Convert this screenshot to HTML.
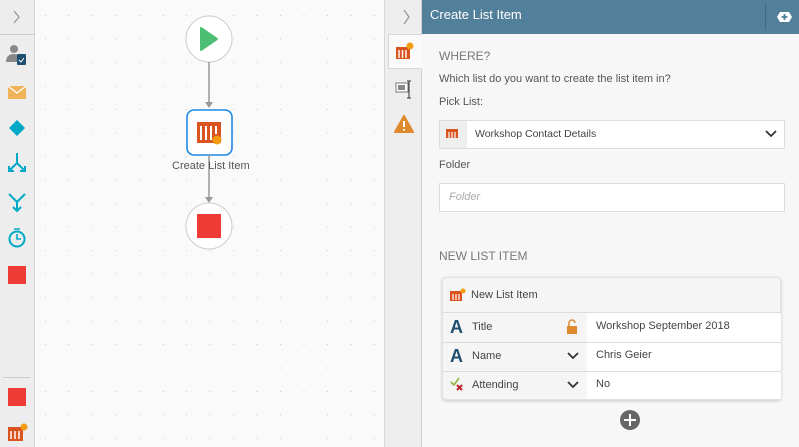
<!DOCTYPE html>
<html><head><style>
*{margin:0;padding:0;box-sizing:border-box}
body{width:799px;height:447px;overflow:hidden;font-family:"Liberation Sans",sans-serif;position:relative;background:#fafafa}
.a{position:absolute}
.t{position:absolute;color:#555;font-size:11px;white-space:nowrap}
</style></head><body>
<!-- left toolbar -->
<div class="a" style="left:0;top:0;width:35px;height:447px;background:#ededed;border-right:1px solid #d6d6d6"></div>
<div class="a" style="left:0;top:34px;width:35px;height:1px;background:#ccc"></div>
<svg class="a" style="left:0;top:0" width="35" height="447">
<path d="M14 11l5 6-5 6" stroke="#999" stroke-width="1.3" fill="none"/>
<circle cx="14" cy="49" r="4" fill="#888"/><path d="M6 62q0-8 8-8q6 0 7 5v3z" fill="#888"/>
<rect x="17" y="54" width="9" height="11" rx="1" fill="#1f4e6e"/><path d="M19 60l2 2 3-4" stroke="#fff" fill="none"/>
<rect x="8" y="86" width="18" height="13" fill="#f0b35a"/><path d="M8 86l9 7 9-7" stroke="#fff" stroke-width="1.3" fill="none"/>
<path d="M17 120l8 8-8 8-8-8z" fill="#00a9c7"/>
<path d="M17 153v10M17 163l-7 7M17 163l7 7M9 166v5h5M25 166v5h-5" stroke="#00a9c7" stroke-width="2" fill="none"/>
<path d="M9 194l8 8 8-8M17 202v9M13 207l4 4 4-4" stroke="#00a9c7" stroke-width="2" fill="none"/>
<circle cx="17" cy="239" r="7.5" stroke="#00a9c7" stroke-width="2" fill="none"/><path d="M17 234v5h4M14 229h6" stroke="#00a9c7" stroke-width="1.6" fill="none"/>
<rect x="8" y="266" width="18" height="18" fill="#ef3b36"/>
<rect x="3" y="377" width="27" height="1" fill="#ccc"/>
<rect x="8" y="388" width="18" height="18" fill="#ef3b36"/>
<rect x="8" y="427" width="15" height="14" fill="#d9541e"/><path d="M11 431v8M15 431v8M19 431v8" stroke="#fff" stroke-width="1.5"/><circle cx="24" cy="427" r="3.5" fill="#f39c12"/>
</svg>
<!-- canvas dots -->
<svg class="a" style="left:36px;top:0" width="348" height="447">
<defs><pattern id="d" width="23.5" height="23.5" patternUnits="userSpaceOnUse" x="9" y="15"><rect width="1" height="1" fill="#ccc"/></pattern></defs>
<rect width="348" height="447" fill="url(#d)"/>
</svg>
<svg class="a" style="left:150px;top:0" width="120" height="260">
<circle cx="59" cy="39" r="23" fill="#fff" stroke="#ccc"/>
<path d="M51 28l16 11-16 11z" fill="#4cbf74" stroke="#4cbf74" stroke-linejoin="round" stroke-width="2"/>
<path d="M59 62v44" stroke="#999" stroke-width="1.5"/><path d="M55 102l4 6 4-6z" fill="#999"/>
<rect x="37" y="110" width="45" height="45" rx="7" fill="#fff" stroke="#1e88e5" stroke-width="1.6"/>
<rect x="47" y="122" width="24" height="21" fill="#d9541e"/><path d="M51 126v14M56 126v14M61 126v14M66 126v8" stroke="#fff" stroke-width="2"/>
<circle cx="67" cy="140" r="4.5" fill="#f39c12"/>
<path d="M59 155v46" stroke="#999" stroke-width="1.5"/><path d="M55 197l4 6 4-6z" fill="#999"/>
<circle cx="59" cy="226" r="23" fill="#fff" stroke="#ccc"/>
<rect x="47" y="214" width="24" height="24" fill="#ef3b36"/>
</svg>
<div class="t" style="left:172px;top:160px;color:#555">Create List Item</div>
<!-- tab strip -->
<div class="a" style="left:384px;top:0;width:38px;height:447px;background:#eeeeee;border-left:1px solid #d8d8d8;border-right:1px solid #d0d0d0"></div>
<div class="a" style="left:388px;top:34px;width:34px;height:35px;background:#fafafa;border:1px solid #d8d8d8;border-right:none"></div>
<svg class="a" style="left:384px;top:0" width="38" height="447">
<path d="M20 10l5 7-5 7" stroke="#999" stroke-width="1.3" fill="none"/>
<rect x="12" y="47" width="14" height="12" fill="#d9541e"/><path d="M15 50v8M18.5 50v8M22 50v8" stroke="#fff" stroke-width="1.4"/><circle cx="26" cy="46" r="3.5" fill="#f39c12"/>
<rect x="12" y="83" width="12" height="9" fill="#fff" stroke="#777"/><rect x="14" y="85" width="7" height="5" fill="#888"/><path d="M25 81v17M23 81h4M23 98h4" stroke="#333"/>
<path d="M20 116l9 16h-18z" fill="#e08a2e" stroke="#e08a2e" stroke-linejoin="round" stroke-width="2"/><path d="M20 121v6M20 129v1.5" stroke="#fff" stroke-width="2"/>
</svg>
<!-- right panel -->
<div class="a" style="left:422px;top:34px;width:377px;height:413px;background:#f7f7f7"></div>
<div class="a" style="left:422px;top:0;width:377px;height:34px;background:#527f9a"></div>
<div class="t" style="left:430px;top:7px;color:#fff;font-size:13px">Create List Item</div>
<div class="a" style="left:765px;top:3px;width:1px;height:27px;background:#3f6a83"></div>
<svg class="a" style="left:772px;top:8px" width="24" height="18"><path d="M5 9l3-5h9l3 5-3 5h-9z" fill="#fff"/><path d="M12.5 6v6M9.5 9h6" stroke="#527f9a" stroke-width="1.8"/></svg>
<div class="t" style="left:439px;top:49px;font-size:12px;color:#777">WHERE?</div>
<div class="t" style="left:439px;top:73px">Which list do you want to create the list item in?</div>
<div class="t" style="left:439px;top:96px">Pick List:</div>
<div class="a" style="left:439px;top:120px;width:346px;height:29px;background:#fff;border:1px solid #ddd"></div>
<div class="a" style="left:440px;top:121px;width:27px;height:27px;background:#eee"></div>
<svg class="a" style="left:446px;top:129px" width="14" height="12"><rect width="12" height="9" fill="#d9541e"/><path d="M3 3v6M6 3v6M9 3v6" stroke="#fff" stroke-width="1.2"/></svg>
<div class="t" style="left:475px;top:128px;font-size:10.5px;color:#444">Workshop Contact Details</div>
<svg class="a" style="left:764px;top:129px" width="14" height="10"><path d="M2 2l5 5 5-5" stroke="#333" stroke-width="1.8" fill="none"/></svg>
<div class="t" style="left:439px;top:159px">Folder</div>
<div class="a" style="left:439px;top:183px;width:346px;height:29px;background:#fff;border:1px solid #ddd"></div>
<div class="t" style="left:449px;top:191px;font-style:italic;color:#aaa">Folder</div>
<div class="t" style="left:439px;top:249px;font-size:12px;color:#777">NEW LIST ITEM</div>
<div class="a" style="left:442px;top:277px;width:339px;height:123px;background:#f5f5f5;border:1px solid #e2e2e2;border-radius:4px;box-shadow:0 1px 3px rgba(0,0,0,.2)"></div>
<svg class="a" style="left:450px;top:288px" width="16" height="14"><rect y="3" width="12" height="10" fill="#d9541e"/><path d="M3 6v6M6 6v6M9 6v6" stroke="#fff" stroke-width="1.2"/><circle cx="13" cy="3" r="2.5" fill="#f39c12"/></svg>
<div class="t" style="left:471px;top:289px;color:#444">New List Item</div>
<div class="a" style="left:587px;top:313px;width:194px;height:86px;background:#fff"></div>
<div class="a" style="left:443px;top:312px;width:338px;height:1px;background:#ddd"></div>
<div class="a" style="left:443px;top:342px;width:338px;height:1px;background:#ddd"></div>
<div class="a" style="left:443px;top:371px;width:338px;height:1px;background:#ddd"></div>
<div class="t" style="left:450px;top:317px;font-size:18px;font-weight:bold;color:#1f4e6e">A</div>
<div class="t" style="left:450px;top:346px;font-size:18px;font-weight:bold;color:#1f4e6e">A</div>
<svg class="a" style="left:450px;top:376px" width="16" height="16"><path d="M1 6l3 3 5-7" stroke="#8bb63a" stroke-width="1.6" fill="none"/><path d="M7 9l5 5M12 9l-5 5" stroke="#c0262d" stroke-width="2"/></svg>
<div class="t" style="left:472px;top:321px;color:#444">Title</div>
<div class="t" style="left:472px;top:350px;color:#444">Name</div>
<div class="t" style="left:472px;top:379px;color:#444">Attending</div>
<svg class="a" style="left:566px;top:319px" width="12" height="16"><path d="M3 7V4a3 3 0 016 0" stroke="#e08a2e" stroke-width="1.5" fill="none"/><rect x="1" y="7" width="10" height="8" fill="#e08a2e"/></svg>
<svg class="a" style="left:566px;top:351px" width="14" height="10"><path d="M2 2l5 5 5-5" stroke="#333" stroke-width="1.8" fill="none"/></svg>
<svg class="a" style="left:566px;top:380px" width="14" height="10"><path d="M2 2l5 5 5-5" stroke="#333" stroke-width="1.8" fill="none"/></svg>
<div class="t" style="left:596px;top:320px;color:#444">Workshop September 2018</div>
<div class="t" style="left:596px;top:349px;color:#444">Chris Geier</div>
<div class="t" style="left:596px;top:378px;color:#444">No</div>
<svg class="a" style="left:619px;top:409px" width="22" height="22"><circle cx="11" cy="11" r="10" fill="#666"/><path d="M11 5v12M5 11h12" stroke="#fff" stroke-width="2"/></svg>
</body></html>
